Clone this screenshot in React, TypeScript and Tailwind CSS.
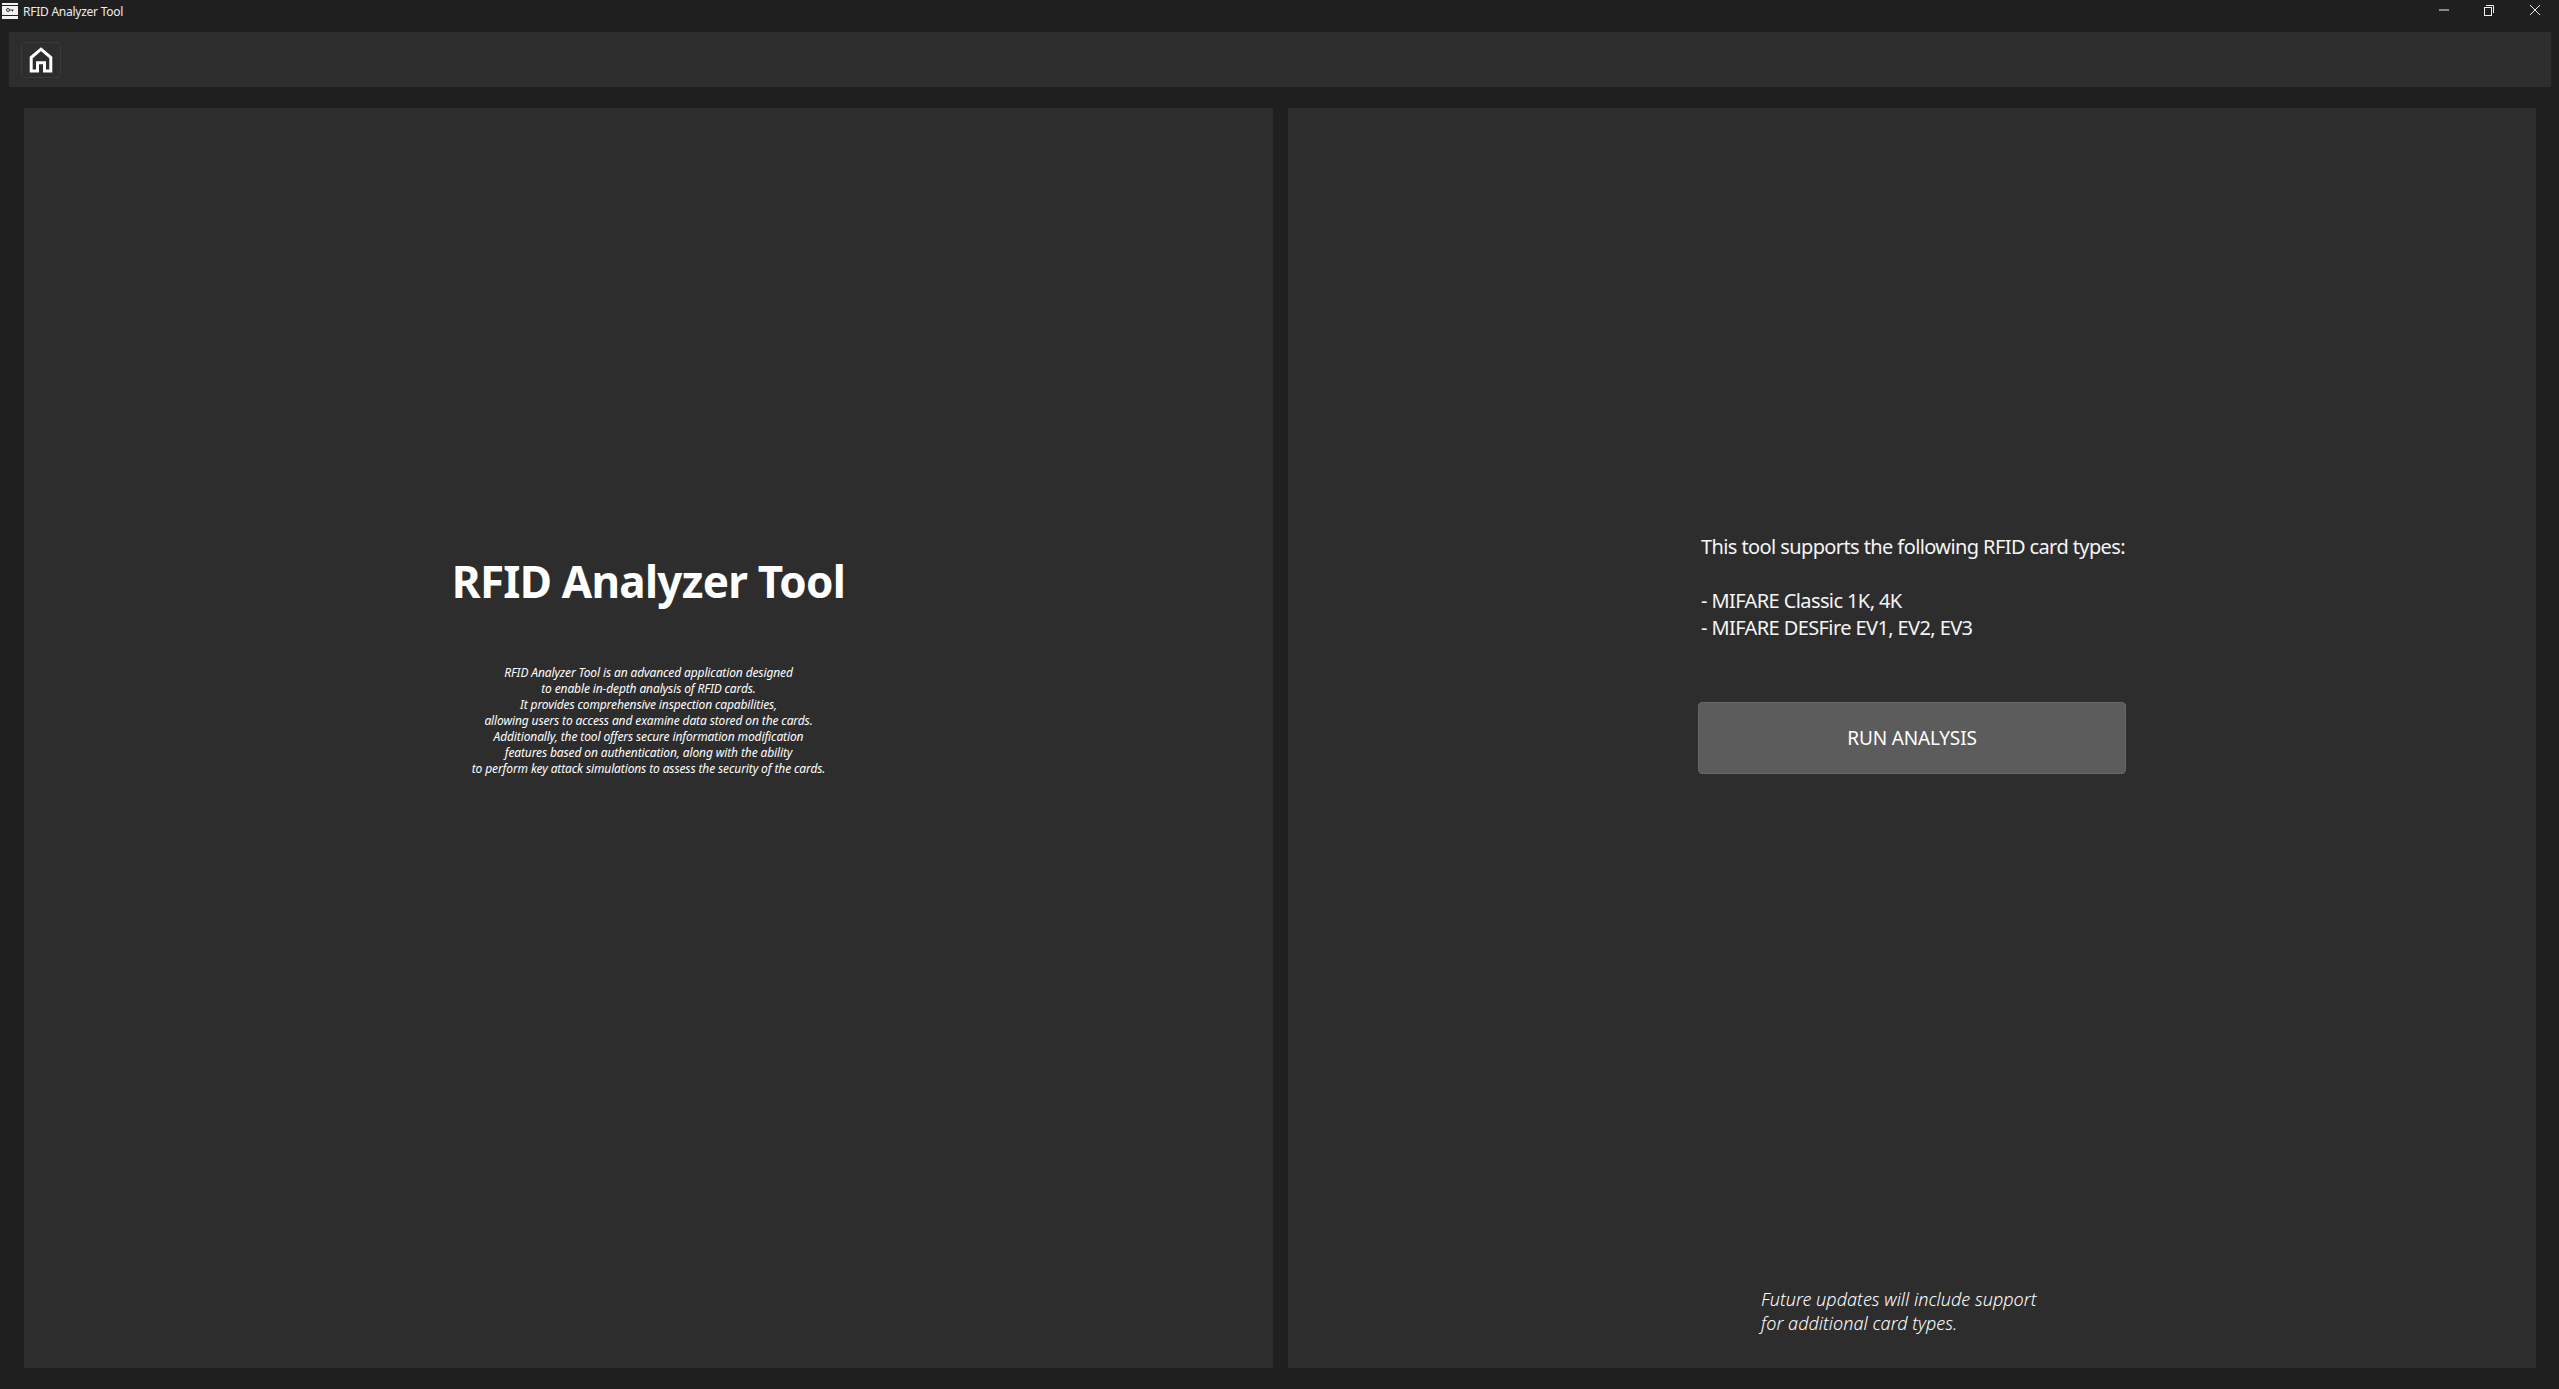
export default function App() {
  const font = { fontFamily: '"Noto Sans", "Open Sans", sans-serif' };
  return (
    <div style={font} className="w-[2559px] h-[1389px] flex flex-col bg-[#1f1f1f] text-white overflow-hidden">
      <div className="h-[32px] flex items-start shrink-0">
        <svg className="ml-[2px] mt-[3px]" width="16" height="16" viewBox="0 0 16 16">
          <rect x="0" y="0" width="16" height="2" fill="#f2f2f2" />
          <rect x="0" y="3" width="16" height="9" fill="#f2f2f2" />
          <rect x="0" y="13" width="16" height="3" fill="#f2f2f2" />
          <circle cx="6" cy="7" r="1.5" fill="none" stroke="#333" strokeWidth="1" />
          <path d="M7.5 7h4M10.5 7v1.5" stroke="#333" strokeWidth="1" fill="none" />
        </svg>
        <span className="ml-[5px] mt-[3px] text-[12px] leading-[18px] text-[#eeeeee] tracking-[-0.25px]">RFID Analyzer Tool</span>
        <div className="ml-auto flex items-center h-[20px]">
          <svg className="mr-[35px]" width="10" height="2" viewBox="0 0 10 2"><path d="M0 1h10" stroke="#f0f0f0" strokeWidth="1" /></svg>
          <svg className="mr-[36px]" width="10" height="11" viewBox="0 0 10 11" fill="none" stroke="#f0f0f0" strokeWidth="1">
            <rect x="0.5" y="2.5" width="7" height="8" />
            <path d="M2 .5h7.5V8" />
          </svg>
          <svg className="mr-[19px]" width="10" height="10" viewBox="0 0 10 10" fill="none" stroke="#f0f0f0" strokeWidth="1"><path d="M0 0l10 10M10 0L0 10" /></svg>
        </div>
      </div>
      <div className="h-[55px] ml-[9px] mr-[8px] bg-[#2d2d2d] flex items-center pl-[12px] shrink-0">
        <div className="w-[40px] h-[36px] border border-[#3a3a3a] rounded-[4px] flex items-center justify-center">
          <svg width="24" height="26" viewBox="0 0 24 26" fill="none" stroke="#ffffff" strokeWidth="3">
            <path d="M2.2 24V10.5L12 2.2l9.8 8.3V24h-6.3v-8.2H8.5V24z" strokeLinejoin="miter" />
          </svg>
        </div>
      </div>
      <div className="flex mt-[21px] ml-[24px] gap-[15px] h-[1260px]">
        <div className="w-[1249px] h-full bg-[#2d2d2d] flex flex-col items-center pt-[443px]">
          <h1 className="text-[44px] leading-[60px] font-bold tracking-[-0.75px]">RFID Analyzer Tool</h1>
          <p className="mt-[54px] text-center italic text-[12px] leading-[16px] text-white tracking-[-0.12px]">
            RFID Analyzer Tool is an advanced application designed<br />
            to enable in-depth analysis of RFID cards.<br />
            It provides comprehensive inspection capabilities,<br />
            allowing users to access and examine data stored on the cards.<br />
            Additionally, the tool offers secure information modification<br />
            features based on authentication, along with the ability<br />
            to perform key attack simulations to assess the security of the cards.
          </p>
        </div>
        <div className="w-[1248px] h-full bg-[#2d2d2d] flex flex-col relative pl-[413px] pt-[425px]">
          <p className="text-[20px] leading-[27px] text-[#f5f5f5] tracking-[-0.6px]">
            This tool supports the following RFID card types:<br /><br />
            - MIFARE Classic 1K, 4K<br />
            - MIFARE DESFire EV1, EV2, EV3
          </p>
          <button className="mt-[61px] ml-[-3px] w-[428px] h-[72px] bg-[#5c5c5c] border border-[#686868] rounded-[4px] text-[19px] text-white tracking-[-0.15px]">RUN ANALYSIS</button>
          <p className="absolute left-[473px] top-[1179px] italic font-light text-[18px] leading-[24px] text-white tracking-[0.02px]">
            Future updates will include support<br />
            for additional card types.
          </p>
        </div>
      </div>
    </div>
  );
}
